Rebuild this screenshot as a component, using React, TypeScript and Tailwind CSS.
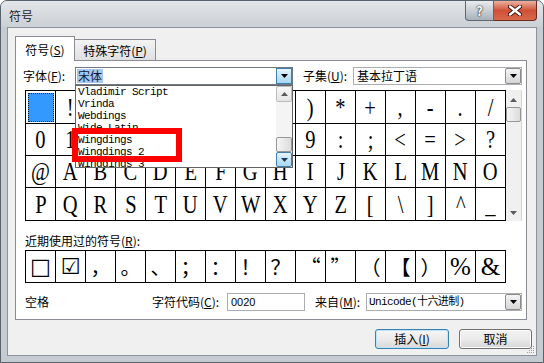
import React from "react";

const Tri = ({ up = false, color = "#000" }: { up?: boolean; color?: string }) => (
  <svg width="7" height="4" viewBox="0 0 7 4">
    <polygon points={up ? "0,4 7,4 3.5,0" : "0,0 7,0 3.5,4"} fill={color} />
  </svg>
);

const rows: string[][] = [
  [" ", "!", '"', "#", "$", "%", "&", "'", "(", ")", "*", "+", ",", "-", ".", "/"],
  ["0", "1", "2", "3", "4", "5", "6", "7", "8", "9", ":", ";", "<", "=", ">", "?"],
  ["@", "A", "B", "C", "D", "E", "F", "G", "H", "I", "J", "K", "L", "M", "N", "O"],
  ["P", "Q", "R", "S", "T", "U", "V", "W", "X", "Y", "Z", "[", "\\", "]", "^", "_"],
];
const rowCls = ["h-[33px]", "h-[32px]", "h-[32px]", "h-[33px]"];

const serif = "font-['Liberation_Serif','Noto_Sans_CJK_SC',serif]";
const cjk = "font-['Noto_Sans_CJK_SC',sans-serif]";
const sym = "font-['DejaVu_Sans',sans-serif]";

const recent: { c: string; f: string }[] = [
  { c: "□", f: `${sym} text-[22px]` },
  { c: "☑", f: `${sym} text-[22px] font-bold` },
  { c: "，", f: `${cjk} text-[20px]` },
  { c: "。", f: `${cjk} text-[20px]` },
  { c: "、", f: `${cjk} text-[20px]` },
  { c: "；", f: `${cjk} text-[20px]` },
  { c: "：", f: `${cjk} text-[20px]` },
  { c: "！", f: `${cjk} text-[20px]` },
  { c: "？", f: `${cjk} text-[20px]` },
  { c: "“", f: `${cjk} text-[20px]` },
  { c: "”", f: `${cjk} text-[20px]` },
  { c: "（", f: `${cjk} text-[20px]` },
  { c: "【", f: `${cjk} text-[20px]` },
  { c: "）", f: `${cjk} text-[20px]` },
  { c: "%", f: `${serif} text-[25px]` },
  { c: "&", f: `${serif} text-[25px]` },
];

const fonts = ["Vladimir Script", "Vrinda", "Webdings", "Wide Latin", "Wingdings", "Wingdings 2", "Wingdings 3"];

function GrayArrowBtn() {
  return (
    <div className="w-[16px] h-[16px] flex items-center justify-center rounded-[2px] border border-[#8c8c8c] bg-linear-to-b from-[#f4f4f4] to-[#d6d6d6]">
      <Tri />
    </div>
  );
}

export default function App() {
  return (
    <div className="w-[544px] h-[363px] relative overflow-hidden bg-white font-['Noto_Sans_CJK_SC',sans-serif] text-[12px] text-black">
      <div className="w-full h-full flex flex-col rounded-t-[7px] border border-[#58626c] bg-[#c5cbd1]">
        {/* title bar */}
        <div className="h-[26px] flex justify-between rounded-t-[6px] bg-linear-to-b from-[#e3e6e9] to-[#cbd0d5]">
          <div className="pl-[8px] pt-[8px] leading-[14px] text-[12px] text-[#1e1e1e]">符号</div>
          <div className="flex items-start pr-[6px]">
            <div className="w-[29px] h-[20px] rounded-bl-[4px] border border-t-0 border-[#5d6773] bg-linear-to-b from-[#e9ecef] via-[#c9cfd5] to-[#a9b1ba] flex items-center justify-center text-white font-bold text-[13px] leading-none [text-shadow:0_0_2px_#222,0_0_1px_#000]">
              ?
            </div>
            <div className="w-[43px] h-[20px] rounded-br-[4px] border border-t-0 border-l-0 border-[#6b2a1e] bg-linear-to-b from-[#eab0a0] via-[#cf4f36] to-[#d9684b] flex items-center justify-center">
              <svg width="14" height="11" viewBox="0 0 14 11">
                <path d="M2 1.5 L12 9.5 M12 1.5 L2 9.5" stroke="#3a1008" strokeWidth="4.2" strokeLinecap="round" />
                <path d="M2 1.5 L12 9.5 M12 1.5 L2 9.5" stroke="#ffffff" strokeWidth="2.4" strokeLinecap="round" />
              </svg>
            </div>
          </div>
        </div>

        {/* body */}
        <div className="ml-[6px] w-[530px] h-[329px] border border-[#8b949e] bg-[#f0f0f0] flex flex-col relative">
          {/* tabs */}
          <div className="flex items-end h-[24px] mt-[8px] ml-[7px]">
            <div className="h-[25px] w-[60px] mb-[-1px] relative z-10 bg-white border border-b-0 border-[#898c95] flex items-center justify-center pt-[1px]">
              符号(<span className="underline">S</span>)
            </div>
            <div className="h-[21px] w-[81px] border border-l-0 border-b-0 border-[#898c95] bg-linear-to-b from-[#f3f3f3] to-[#e0e0e0] flex items-center justify-center pt-[1px]">
              特殊字符(<span className="underline">P</span>)
            </div>
          </div>

          {/* panel */}
          <div className="ml-[7px] w-[512px] h-[260px] border border-[#898c95] bg-white pt-[6px] pl-[7px] flex flex-col">
            {/* font row */}
            <div className="flex items-center h-[18px]">
              <div className="w-[52px] leading-[18px]">
                字体(<span className="underline">F</span>):
              </div>
              <div className="w-[218px] h-[18px] border border-[#6f7a86] bg-white flex items-center">
                <div className="ml-[1px] px-[1px] h-[14px] leading-[14px] bg-[#a6c8ee] text-[#0b1a3a]">宋体</div>
                <div className="ml-auto w-[16px] h-[16px] flex items-center justify-center border border-[#3c7fb1] bg-linear-to-b from-[#e5f4fc] to-[#a7d7f4]">
                  <Tri />
                </div>
              </div>
              <div className="ml-[10px] w-[50px] leading-[18px]">
                子集(<span className="underline">U</span>):
              </div>
              <div className="w-[169px] h-[18px] border border-[#abadb3] bg-white flex items-center">
                <div className="pl-[3px] leading-[16px]">基本拉丁语</div>
                <div className="ml-auto">
                  <GrayArrowBtn />
                </div>
              </div>
            </div>

            {/* symbol grid */}
            <div className="mt-[5px] ml-[2px] flex w-fit">
              <div className="border-l border-t border-black">
                {rows.map((r, ri) => (
                  <div key={ri} className={`flex ${rowCls[ri]}`}>
                    {r.map((ch, ci) => (
                      <div
                        key={ci}
                        className={`w-[30px] h-full border-r border-b border-black flex items-center justify-center ${serif} text-[25px] leading-none`}
                      >
                        {ri === 0 && ci === 0 ? (
                          <div className="w-[26px] h-[29px] mt-[1px] bg-[#3399ff] border border-dotted border-[#1a1a1a]" />
                        ) : (
                          <span className="inline-block scale-x-[0.82]">{ch}</span>
                        )}
                      </div>
                    ))}
                  </div>
                ))}
              </div>
              <div className="w-[16px] h-[131px] bg-[#f0f0f0] border-r border-[#d4d4d4] flex flex-col items-center">
                <div className="h-[17px] pt-[2px] flex items-center justify-center">
                  <Tri up color="#5a5a5a" />
                </div>
                <div className="w-[15px] h-[15px] rounded-[2px] border border-[#979797] bg-linear-to-r from-[#f5f5f5] to-[#dcdcdc]" />
                <div className="flex-1" />
                <div className="h-[17px] flex items-center justify-center">
                  <Tri color="#5a5a5a" />
                </div>
              </div>
            </div>

            {/* recent label */}
            <div className="mt-[14px] ml-[2px] h-[12px] leading-[12px]">
              近期使用过的符号(<span className="underline">R</span>):
            </div>

            {/* recent grid */}
            <div className="mt-[3px] ml-[2px] w-fit flex border-l border-t border-black">
              {recent.map((r, i) => (
                <div
                  key={i}
                  className={`w-[30px] h-[32px] border-r border-b border-black flex items-center justify-center leading-none ${r.f}`}
                >
                  {r.c}
                </div>
              ))}
            </div>

            {/* bottom row */}
            <div className="mt-[10px] flex items-center h-[18px]">
              <div className="ml-[2px] w-[127px] leading-[18px]">空格</div>
              <div className="w-[75px] leading-[18px]">
                字符代码(<span className="underline">C</span>):
              </div>
              <div className="w-[78px] h-[18px] border border-[#abadb3] bg-white pl-[3px] flex items-center font-['Liberation_Sans',sans-serif] text-[11px]">
                0020
              </div>
              <div className="ml-[10px] w-[51px] leading-[18px]">
                来自(<span className="underline">M</span>):
              </div>
              <div className="w-[156px] h-[18px] border border-[#abadb3] bg-white flex items-center">
                <div className="pl-[2px] font-['Liberation_Mono','Noto_Sans_CJK_SC',monospace] text-[11px] tracking-[-0.6px] leading-[16px]">
                  Unicode(十六进制)
                </div>
                <div className="ml-auto">
                  <GrayArrowBtn />
                </div>
              </div>
            </div>
          </div>

          {/* buttons */}
          <div className="flex justify-end gap-[10px] pr-[4px] mt-[9px]">
            <div className="w-[74px] h-[20px] rounded-[3px] border border-[#3c7fb1] bg-linear-to-b from-[#f6f6f6] via-[#ebebeb] to-[#d8d8d8] shadow-[inset_0_0_0_1px_#bfe3f8] flex items-center justify-center">
              插入(<span className="underline">I</span>)
            </div>
            <div className="w-[73px] h-[20px] rounded-[3px] border border-[#707070] bg-linear-to-b from-[#f2f2f2] via-[#ebebeb] to-[#d6d6d6] shadow-[inset_0_0_0_1px_#fcfcfc] flex items-center justify-center">
              取消
            </div>
          </div>

          {/* resize grip */}
          <svg className="absolute right-[1px] bottom-[1px]" width="10" height="10" viewBox="0 0 10 10">
            <g fill="#a0a0a0">
              <rect x="8" y="2" width="1" height="1" />
              <rect x="6" y="4" width="1" height="1" />
              <rect x="8" y="4" width="1" height="1" />
              <rect x="4" y="6" width="1" height="1" />
              <rect x="6" y="6" width="1" height="1" />
              <rect x="8" y="6" width="1" height="1" />
              <rect x="2" y="8" width="1" height="1" />
              <rect x="4" y="8" width="1" height="1" />
              <rect x="6" y="8" width="1" height="1" />
              <rect x="8" y="8" width="1" height="1" />
            </g>
          </svg>
        </div>
      </div>

      {/* dropdown list overlay */}
      <div className="absolute left-[75px] top-[85px] w-[218px] h-[83px] border border-[#646464] bg-white flex">
        <div className="flex-1 overflow-hidden pl-[2px] font-['Liberation_Mono',monospace] text-[11px] tracking-[-0.6px]">
          {fonts.map((f) => (
            <div key={f} className="h-[12px] leading-[12px] whitespace-pre">
              {f}
            </div>
          ))}
        </div>
        <div className="w-[16px] h-full bg-[#f4f4f4] flex flex-col">
          <div className="h-[16px] flex items-center justify-center rounded-[2px] border border-[#bcbcbc] bg-linear-to-b from-[#f8f8f8] to-[#e4e4e4]">
            <Tri up color="#5a5a5a" />
          </div>
          <div className="h-[35px]" />
          <div className="h-[15px] rounded-[2px] border border-[#979797] bg-linear-to-r from-[#f5f5f5] to-[#dcdcdc]" />
          <div className="h-[15px] flex items-center justify-center rounded-[2px] border border-[#3c7fb1] bg-linear-to-b from-[#e5f4fc] to-[#a7d7f4]">
            <Tri color="#1a3a5a" />
          </div>
        </div>
      </div>

      {/* red highlight box */}
      <div className="absolute left-[72px] top-[128px] w-[110px] h-[34px] border-[6px] border-[#ff0000]" />
    </div>
  );
}
